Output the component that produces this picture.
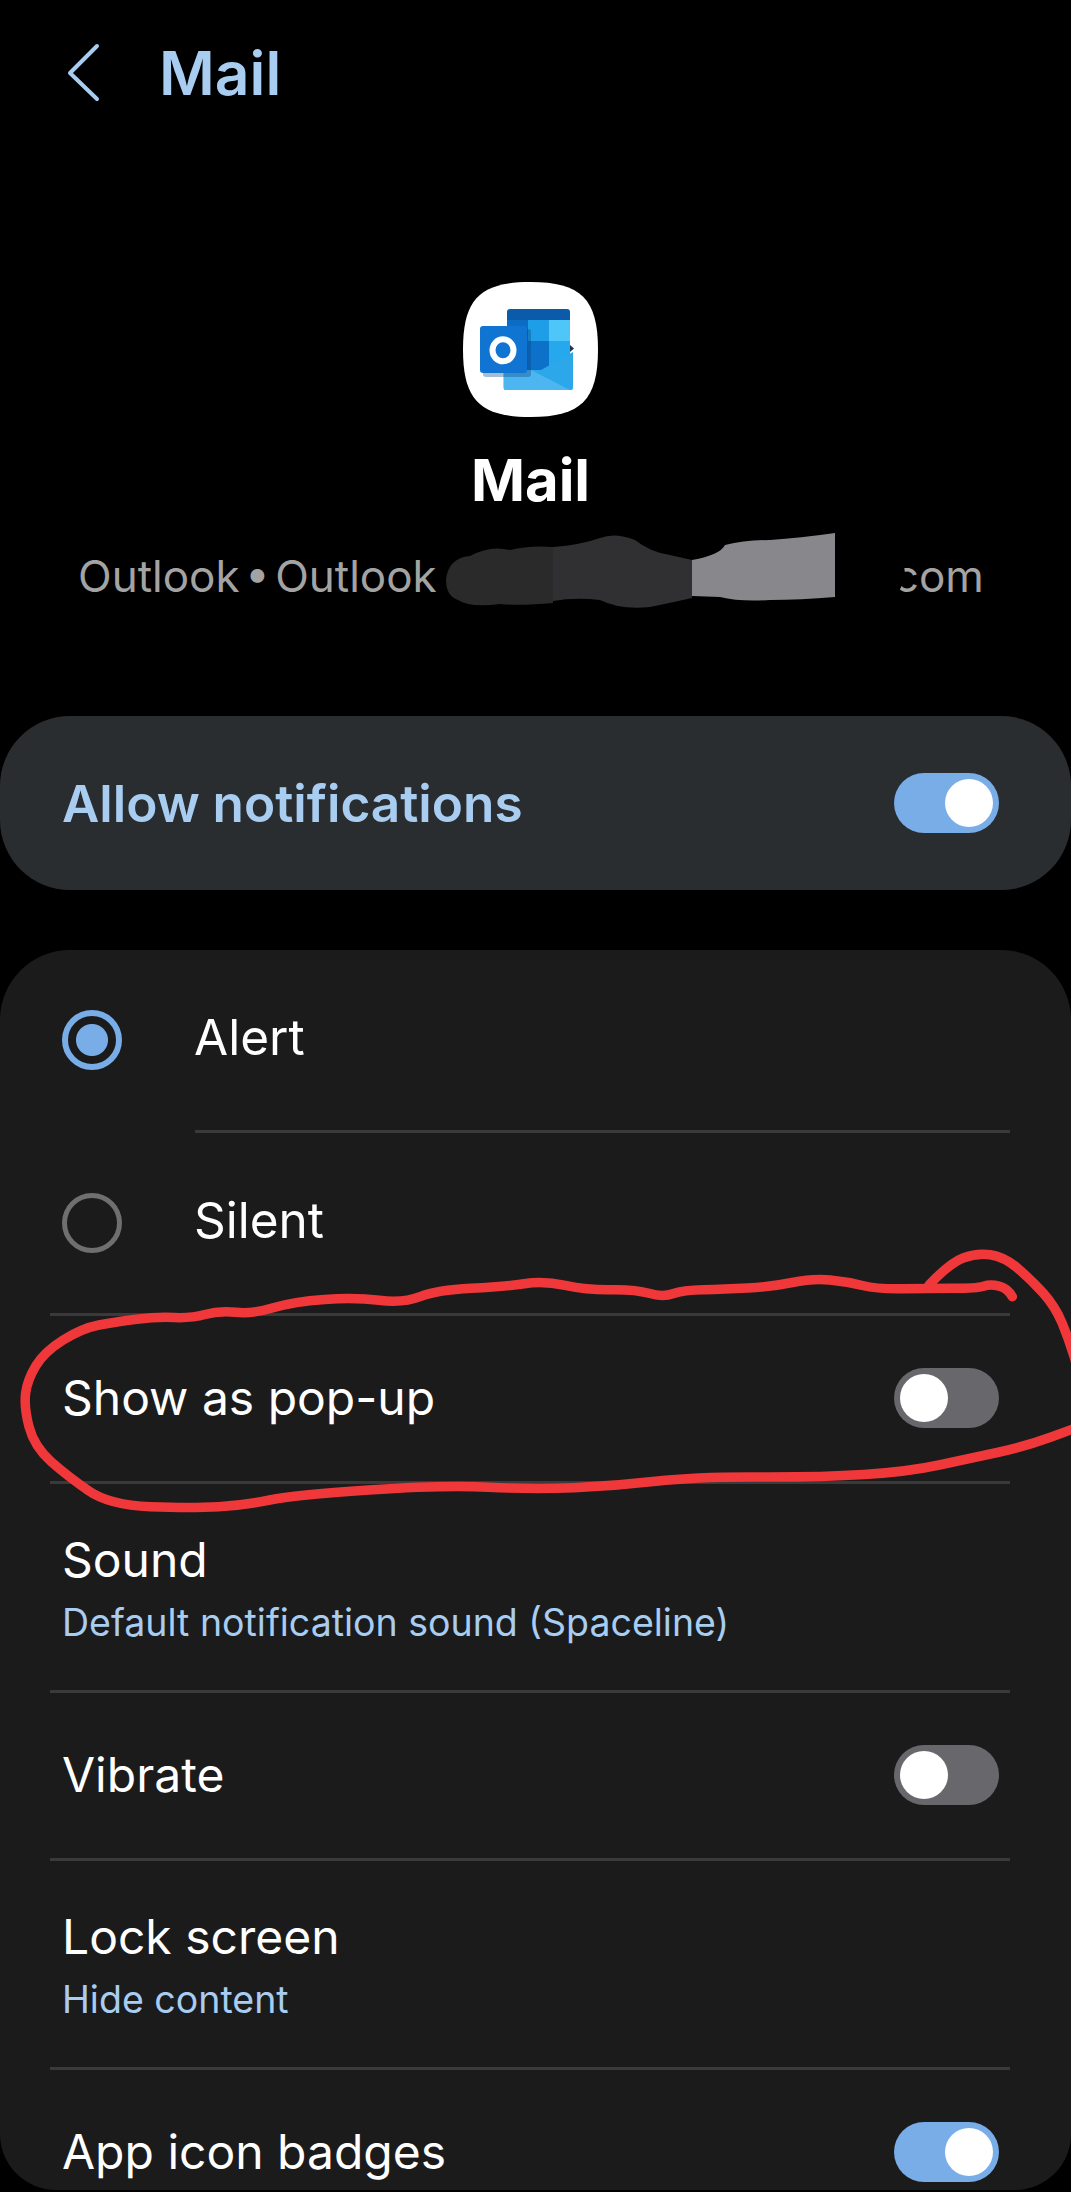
<script lang="ts">
  // scribble points as read from a crop: x/1.464, 1240 + y/3
  const loop = [[1482,170],[1475,145],[1450,132],[1430,145],[1360,145],[1285,148],[1240,125],[1190,115],[1130,140],[1060,148],[1000,150],[970,172],[930,148],[860,150],[795,122],[740,140],[640,150],[590,190],[520,172],[430,185],[370,222],[320,212],[280,235],[230,230],[170,245],[120,265],[65,335],[40,420],[35,500],[50,620],[100,710],[160,795],[280,805],[360,795],[430,765],[650,735],[780,748],[900,738],[1020,710],[1200,712],[1330,695],[1420,655],[1500,620],[1580,560]];
  const tail = [[1360,135],[1390,70],[1430,38],[1470,50],[1510,120],[1545,200],[1565,300],[1580,400]];

  function toPath(list: number[][]) {
    const p = list.map(([x, y]) => [x / 1.464, 1240 + y / 3]);
    let d = `M${p[0][0].toFixed(1)} ${p[0][1].toFixed(1)}`;
    for (let i = 1; i < p.length - 1; i++) {
      const mx = (p[i][0] + p[i + 1][0]) / 2;
      const my = (p[i][1] + p[i + 1][1]) / 2;
      d += ` Q${p[i][0].toFixed(1)} ${p[i][1].toFixed(1)} ${mx.toFixed(1)} ${my.toFixed(1)}`;
    }
    const last = p[p.length - 1];
    return d + ` L${last[0].toFixed(1)} ${last[1].toFixed(1)}`;
  }
</script>

<div class="page">
  <header class="topbar">
    <svg class="back" width="40" height="60" viewBox="0 0 40 60">
      <path d="M32 3 L5 30 L32 56" fill="none" stroke="#a8cdf0" stroke-width="4" stroke-linecap="round" stroke-linejoin="round" />
    </svg>
    <span class="topbar-title">Mail</span>
  </header>

  <section class="hero">
    <svg class="app-icon" width="135" height="135" viewBox="0 0 135 135">
      <path d="M67.5 0 C118 0 135 17 135 67.5 C135 118 118 135 67.5 135 C17 135 0 118 0 67.5 C0 17 17 0 67.5 0Z" fill="#fff" />
      <path d="M44 30 a3 3 0 0 1 3-3 h57 a3 3 0 0 1 3 3 v8 h-63z" fill="#0a5cab" />
      <rect x="44" y="38" width="21" height="55" fill="#0c6cc4" />
      <rect x="65" y="38" width="21" height="21" fill="#1f9ee8" />
      <rect x="86" y="38" width="21" height="21" fill="#4fc6f8" />
      <rect x="65" y="59" width="21" height="33" fill="#0c72c9" />
      <rect x="86" y="59" width="21" height="33" fill="#26a8ec" />
      <path d="M107 63 L111 66.500 L107 70z" fill="#1c3550" />
      <path d="M40.700 88 H78 L110 70 V106 a2 2 0 0 1-2 2 H42.700 a2 2 0 0 1-2-2z" fill="#2ba7ea" />
      <path d="M40.700 88 H68 L107 108 H42.700 a2 2 0 0 1-2-2z" fill="#4db6f0" />
      <rect x="20" y="47" width="48" height="48" rx="3" fill="#0a3f7a" opacity="0.35" />
      <rect x="17" y="44" width="47" height="47" rx="3" fill="#1075d2" />
      <ellipse cx="40" cy="68.300" rx="10.500" ry="11" fill="none" stroke="#fff" stroke-width="6" />
    </svg>
    <h1 class="hero-title">Mail</h1>
    <p class="hero-sub">Outlook • Outlook<span class="hero-gap"></span>com</p>
  </section>

  <section class="card master">
    <span class="master-label">Allow notifications</span>
    <span class="toggle on"><span class="thumb"></span></span>
  </section>

  <section class="card list">
    <div class="row tall">
      <span class="radio checked"></span>
      <span class="label">Alert</span>
    </div>
    <div class="sep inset"></div>
    <div class="row tall">
      <span class="radio"></span>
      <span class="label">Silent</span>
    </div>
    <div class="sep"></div>
    <div class="row">
      <span class="label">Show as pop-up</span>
      <span class="toggle"><span class="thumb"></span></span>
    </div>
    <div class="sep"></div>
    <div class="row double">
      <div class="stack">
        <span class="label">Sound</span>
        <span class="sub">Default notification sound (Spaceline)</span>
      </div>
    </div>
    <div class="sep"></div>
    <div class="row">
      <span class="label">Vibrate</span>
      <span class="toggle"><span class="thumb"></span></span>
    </div>
    <div class="sep"></div>
    <div class="row double">
      <div class="stack">
        <span class="label">Lock screen</span>
        <span class="sub">Hide content</span>
      </div>
    </div>
    <div class="sep"></div>
    <div class="row">
      <span class="label">App icon badges</span>
      <span class="toggle on"><span class="thumb"></span></span>
    </div>
  </section>

  <!-- markup drawn over the screenshot: redaction smear and red circle -->
  <svg class="overlay" width="1071" height="2192" viewBox="0 0 1071 2192">
    <path d="M446 580 Q448 558 470 556 Q490 545 510 550 Q530 545 553 547 V603 Q520 606 500 604 Q470 608 458 600 Q446 596 446 580Z" fill="#2a2a2b" />
    <path d="M553 547 Q580 545 600 538 Q615 532 635 540 Q650 552 670 555 L692 560 V598 Q665 604 650 607 Q620 610 600 600 Q575 597 553 601Z" fill="#303032" />
    <path d="M692 560 Q720 555 725 545 Q745 540 770 540 Q800 538 835 533 V597 Q800 600 770 600 Q740 602 720 597 L692 596Z" fill="#88878b" />
    <path d="M835 533 Q865 520 890 540 Q905 560 905 575 Q900 600 880 605 Q855 608 835 597Z" fill="#000" />
    <g fill="none" stroke="#f0383a" stroke-width="9.500" stroke-linecap="round" stroke-linejoin="round">
      <path d={toPath(loop)} />
      <path d={toPath(tail)} />
    </g>
  </svg>
</div>

<style>
  :global(body) {
    margin: 0;
    background: #000;
  }

  .page {
    position: relative;
    width: 1071px;
    height: 2192px;
    overflow: hidden;
    background: #000;
    font-family: Inter, "Noto Sans", sans-serif;
    color: #fff;
  }

  .topbar {
    display: flex;
    align-items: center;
    height: 146px;
    padding-left: 65px;
    box-sizing: border-box;
  }

  .back {
    flex-shrink: 0;
  }

  .topbar-title {
    margin-left: 54px;
    font-size: 60.5px;
    font-weight: 600;
    color: #a8cdf0;
  }

  .hero {
    display: flex;
    flex-direction: column;
    align-items: center;
    padding: 136px 10px 0 0;
    height: 570px;
    box-sizing: border-box;
  }

  .app-icon {
    flex-shrink: 0;
  }

  .hero-title {
    margin: 26px 0 0;
    font-size: 58px;
    font-weight: 700;
    line-height: 75px;
  }

  .hero-sub {
    display: flex;
    align-self: flex-start;
    margin: 31px 0 0 78px;
    font-size: 44px;
    line-height: 54px;
    font-weight: 400;
    color: #a3a3a3;
    white-space: nowrap;
    word-spacing: -7px;
  }

  .hero-gap {
    width: 457px;
  }

  .card {
    background: #1b1b1c;
  }

  .master {
    display: flex;
    align-items: center;
    justify-content: space-between;
    height: 174px;
    padding: 0 72px 0 62px;
    box-sizing: border-box;
    border-radius: 70px;
    background: #2a2d30;
  }

  .master-label {
    font-size: 51.300px;
    font-weight: 600;
    color: #a8cdf0;
  }

  .list {
    height: 1240px;
    margin-top: 60px;
    border-radius: 70px 70px 56px 56px;
    overflow: hidden;
  }

  .row {
    display: flex;
    align-items: center;
    justify-content: space-between;
    height: 165px;
    padding: 0 72px 2px 62px;
    box-sizing: border-box;
  }

  .row.tall {
    justify-content: flex-start;
    height: 180px;
    padding-bottom: 0;
  }

  .row.tall .label {
    margin-bottom: 7px;
    font-size: 49.500px;
  }

  .row.double {
    height: 206px;
    padding: 4px 72px 0 62px;
  }

  .label {
    font-size: 48px;
    line-height: 60px;
  }

  .stack {
    display: flex;
    flex-direction: column;
    gap: 8px;
  }

  .sub {
    font-size: 37.500px;
    line-height: 50px;
    color: #a8cdf0;
  }

  .sep {
    height: 3px;
    margin: 0 61px 0 50px;
    background: #3a3a3b;
  }

  .sep.inset {
    margin-left: 195px;
  }

  .radio {
    flex-shrink: 0;
    width: 60px;
    height: 60px;
    margin-right: 72px;
    box-sizing: border-box;
    border: 5px solid #6f6f70;
    border-radius: 50%;
  }

  .radio.checked {
    border: 6px solid #78ade8;
    background: radial-gradient(circle, #78ade8 0 15.500px, transparent 16.500px);
  }

  .toggle {
    display: flex;
    align-items: center;
    flex-shrink: 0;
    width: 105px;
    height: 60px;
    padding: 0 6px;
    box-sizing: border-box;
    border-radius: 30px;
    background: #68686c;
  }

  .toggle.on {
    justify-content: flex-end;
    background: #78ade8;
  }

  .thumb {
    width: 48px;
    height: 48px;
    border-radius: 50%;
    background: #fff;
  }

  .overlay {
    position: absolute;
    top: 0;
    left: 0;
    pointer-events: none;
  }
</style>
